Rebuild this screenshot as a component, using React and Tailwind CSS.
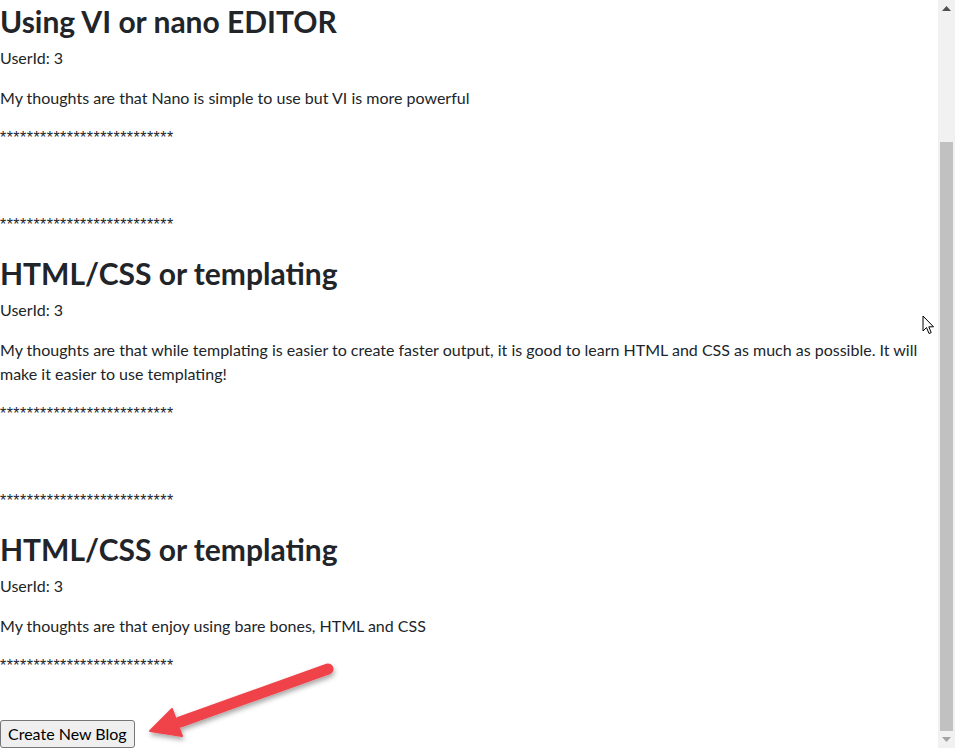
const font = { fontFamily: 'Lato, "Noto Sans", sans-serif' };

const posts = [
  {
    title: 'Using VI or nano EDITOR',
    userId: 3,
    body: 'My thoughts are that Nano is simple to use but VI is more powerful'
  },
  {
    title: 'HTML/CSS or templating',
    userId: 3,
    body: 'My thoughts are that while templating is easier to create faster output, it is good to learn HTML and CSS as much as possible. It will make it easier to use templating!'
  },
  {
    title: 'HTML/CSS or templating',
    userId: 3,
    body: 'My thoughts are that enjoy using bare bones, HTML and CSS'
  }
];

function Stars() {
  return (
    <p className="m-0 text-[16px] leading-[24px] tracking-[0.45px] text-[#212529]" style={{ fontFamily: '"Liberation Sans", Arial, sans-serif' }}>
      **************************
    </p>
  );
}

function Post({ post, first }) {
  return (
    <div className={first ? '' : 'mt-[15px]'}>
      <h2 className="mb-2 h-[38px] pt-[2px] text-[30px] font-bold leading-[38px] text-[#212529]">{post.title}</h2>
      <p className="mb-4 text-[16px] leading-[24px]">UserId: {post.userId}</p>
      <p className="mb-4 text-[16px] leading-[24px]">{post.body}</p>
      <Stars />
    </div>
  );
}

function Scrollbar() {
  return (
    <div className="flex h-full w-[17px] shrink-0 flex-col bg-[#f1f1f1]">
      <div className="flex h-[17px] items-center justify-center">
        <svg width="9" height="5" viewBox="0 0 9 5"><path d="M0 5 L4.5 0 L9 5 Z" fill="#505050" /></svg>
      </div>
      <div className="mt-[125px] ml-[2px] h-[589px] w-[13px] bg-[#c1c1c1]" />
      <div className="mt-auto flex h-[17px] items-center justify-center">
        <svg width="9" height="5" viewBox="0 0 9 5"><path d="M0 0 L4.5 5 L9 0 Z" fill="#a3a3a3" /></svg>
      </div>
    </div>
  );
}

export default function App() {
  return (
    <div className="relative flex h-[748px] w-[955px] overflow-hidden bg-white text-[#212529]" style={font}>
      <div className="w-[938px] shrink-0 overflow-hidden pr-[8px]">
        {posts.map((post, i) => (
          <div key={i}>
            <Post post={post} first={i === 0} />
            {i < posts.length - 1 && (
              <div className="mt-[63px]">
                <Stars />
              </div>
            )}
          </div>
        ))}
        <button
          type="button"
          className="mt-[42px] rounded-[3px] border border-[#767676] bg-[#efefef] px-[7px] py-px text-[16px] leading-[24px] text-[#000]"
        >
          Create New Blog
        </button>
      </div>
      <Scrollbar />

      <svg className="pointer-events-none absolute left-[140px] top-[650px]" width="200" height="98" viewBox="0 0 200 98">
        <defs>
          <filter id="sh" x="-20%" y="-40%" width="140%" height="180%">
            <feDropShadow dx="1" dy="3" stdDeviation="2.5" floodColor="#000" floodOpacity="0.35" />
          </filter>
        </defs>
        <g filter="url(#sh)">
          <line x1="188" y1="19" x2="40" y2="72" stroke="#f0434a" strokeWidth="11" strokeLinecap="round" />
          <path d="M10 81 L32 59 L42 86 Z" fill="#f0434a" stroke="#f0434a" strokeWidth="2" strokeLinejoin="round" />
        </g>
      </svg>

      <svg className="pointer-events-none absolute left-[922px] top-[315px]" width="13" height="20" viewBox="0 0 13 20">
        <path d="M1 1 L1 16 L4.5 12.5 L7 18.5 L9.2 17.6 L6.8 11.8 L11.5 11.8 Z" fill="#fff" stroke="#000" strokeWidth="1" strokeLinejoin="round" />
      </svg>
    </div>
  );
}
